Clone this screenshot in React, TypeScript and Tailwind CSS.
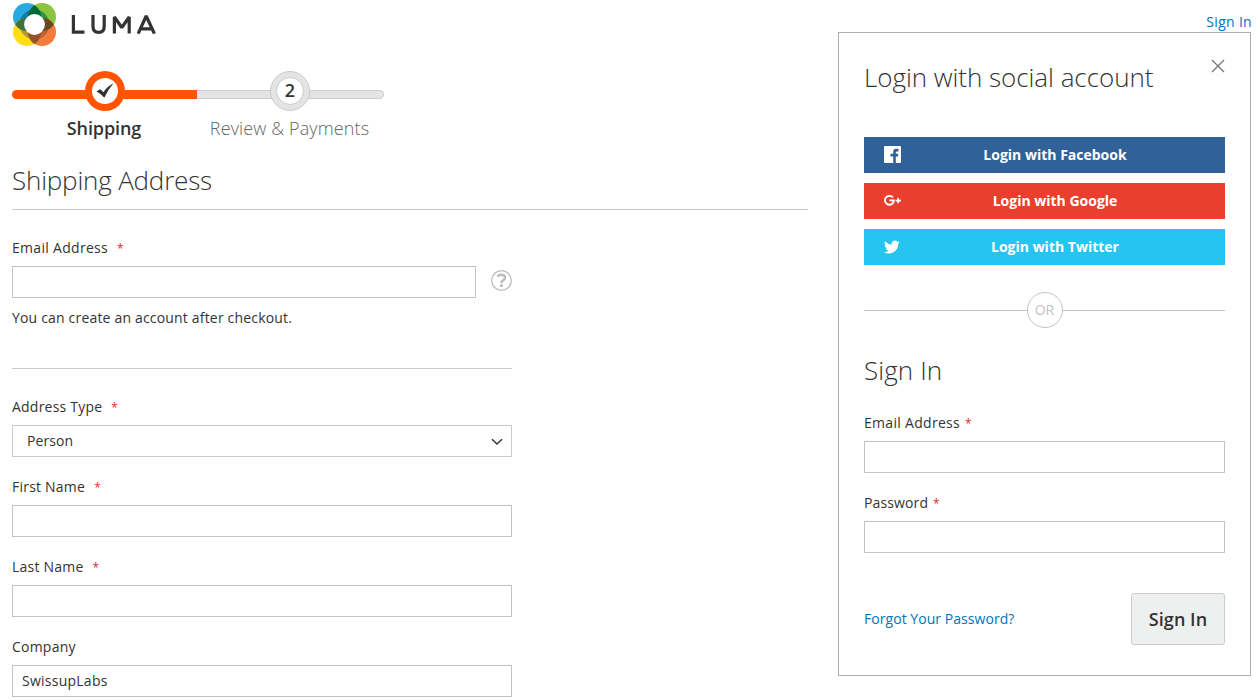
import React from "react";

const inputClass =
  "block h-8 w-full border border-[#c2c2c2] bg-white px-[9px] pb-[2px] text-sm tracking-[0.25px] text-[#333] outline-none";

function Star({ wide = false }: { wide?: boolean }) {
  return (
    <span className={wide ? "ml-[9px] text-xs text-[#e02b27]" : "ml-[5px] text-xs text-[#e02b27]"}>*</span>
  );
}

function Logo() {
  return (
    <svg className="ml-3 block h-[50px] w-[146px]" viewBox="12 0 146 50" role="img" aria-label="Luma">
      <defs>
        <clipPath id="tl"><circle cx="27" cy="17" r="14" /></clipPath>
        <clipPath id="tr"><circle cx="42" cy="17" r="14" /></clipPath>
        <clipPath id="bl"><circle cx="27" cy="32" r="14" /></clipPath>
        <clipPath id="br"><circle cx="42" cy="32" r="14" /></clipPath>
      </defs>
      <circle cx="27" cy="17" r="14" fill="#27aae1" />
      <circle cx="42" cy="17" r="14" fill="#8bc53f" />
      <circle cx="27" cy="32" r="14" fill="#ffde17" />
      <circle cx="42" cy="32" r="14" fill="#f37b3c" />
      <g clipPath="url(#tl)"><circle cx="34.5" cy="24.5" r="15" fill="#0f7ba5" /></g>
      <g clipPath="url(#tr)"><circle cx="34.5" cy="24.5" r="15" fill="#2f9440" /></g>
      <g clipPath="url(#bl)"><circle cx="34.5" cy="24.5" r="15" fill="#b39a35" /></g>
      <g clipPath="url(#br)"><circle cx="34.5" cy="24.5" r="15" fill="#c0622f" /></g>
      <circle cx="27" cy="17" r="14" fill="#006838" clipPath="url(#tr)" />
      <circle cx="27" cy="17" r="14" fill="#3e7238" clipPath="url(#bl)" />
      <circle cx="42" cy="32" r="14" fill="#6b4722" clipPath="url(#tr)" />
      <circle cx="42" cy="32" r="14" fill="#94522a" clipPath="url(#bl)" />
      <circle cx="34.5" cy="24.5" r="10.4" fill="#fff" />
      <g fill="none" stroke="#333" strokeWidth="3.2">
        <path d="M73.4 15V32.2H84.5" />
        <path d="M93 15V26.5Q93 32.3 98.6 32.3T104.2 26.5V15" />
        <path d="M114.4 33.5V17L121.8 27.5L129.2 17V33.5" strokeLinejoin="bevel" />
        <path d="M138.2 33.7L146.2 16L154.4 33.7M141 28.8H151.5" strokeLinejoin="bevel" />
      </g>
    </svg>
  );
}

function Progress() {
  return (
    <ol className="flex w-[372px] text-center text-lg leading-6">
      <li className="flex w-[185px] flex-col items-center">
        <div className="grid h-10 w-full items-center">
          <div className="col-start-1 row-start-1 mt-[7px] h-[9px] rounded-l-full bg-[#ff5501]" />
          <div className="col-start-1 row-start-1 flex size-10 items-center justify-center justify-self-center rounded-full bg-[#ff5501]">
            <div className="flex size-[26px] items-center justify-center rounded-full bg-white">
              <svg className="mb-[2px] h-[15px] w-[18px]" viewBox="0 0 18 15">
                <path d="M.5 8.5L4 6.2Q6 7.4 7.3 9.2Q11.5 3.2 17.5 .3Q12.5 6 8.3 14.8Q5.2 10.7.5 8.5Z" fill="#333" />
              </svg>
            </div>
          </div>
        </div>
        <span className="mr-px mt-[5px] font-semibold tracking-[-0.1px] text-[#333]">Shipping</span>
      </li>
      <li className="flex w-[187px] flex-col items-center">
        <div className="grid h-10 w-full items-center">
          <div className="col-start-1 row-start-1 mt-[7px] h-[9px] rounded-r-full border border-l-0 border-[#ccc] bg-[#e4e4e4]" />
          <div className="col-start-1 row-start-1 mr-[2px] flex size-10 items-center justify-center justify-self-center rounded-full border border-[#ccc] bg-[#e4e4e4]">
            <div className="flex size-7 items-center justify-center rounded-full border border-[#ccc] bg-white pb-[2px] pl-px font-semibold text-[#333]">2</div>
          </div>
        </div>
        <span className="mr-[2px] mt-[5px] whitespace-nowrap font-light tracking-[0.13px] text-[#666]">Review &amp; Payments</span>
      </li>
    </ol>
  );
}

function Field({ label, required, children }: { label: string; required?: boolean; children: React.ReactNode }) {
  return (
    <div className="h-20 w-[500px]">
      <div className="mb-2 h-5 tracking-[0.22px]">{label}{required && <Star wide />}</div>
      {children}
    </div>
  );
}

function Social({ color, icon, name }: { color: string; icon: React.ReactNode; name: string }) {
  return (
    <button className={`flex h-9 w-full items-center pl-5 text-sm font-bold text-white ${color}`}>
      <span className="flex w-[17px]">{icon}</span>
      <span className="flex-1 pl-[2px] pr-[18px] text-center">Login with {name}</span>
    </button>
  );
}

export default function App() {
  return (
    <div className="flex h-[700px] w-[1260px] overflow-hidden bg-white font-['Open_Sans',sans-serif] text-sm leading-5 text-[#333]">
      <main className="w-[838px]">
        <Logo />
        <div className="ml-3 mt-[21px] w-[796px]">
          <Progress />
          <h1 className="mt-[23px] h-[47px] border-b border-[#ccc] text-[26px] font-light leading-[34px] tracking-[-0.19px]">Shipping Address</h1>
          <div className="mt-7 h-5 tracking-[0.3px]">Email Address<Star wide /></div>
          <div className="mt-2 flex w-[500px] items-start">
            <input className="h-8 w-[464px] border border-[#c2c2c2] outline-none" aria-label="Email Address" />
            <svg className="ml-[15px] mt-1 size-[21px]" viewBox="0 0 21 21" fill="none" stroke="#bbb">
              <circle cx="10.5" cy="10.5" r="9.8" strokeWidth="1.3" />
              <path d="M6.4 6.2Q8.2 4.8 10.4 4.8Q14 4.8 14 7.6Q14 9.2 12.2 10.3Q10.5 11.3 10.5 12.9" strokeWidth="2.4" />
              <path d="M10.5 14.3V17" strokeWidth="2.8" />
            </svg>
          </div>
          <p className="mt-[10px] box-content h-[60px] w-[500px] border-b border-[#ccc] leading-5 tracking-[0.18px]">You can create an account after checkout.</p>
          <div className="mt-7">
            <Field label="Address Type" required>
              <div className="flex h-8 w-full items-center justify-between border border-[#ccc] pl-[14px] pr-[8.5px] tracking-[0.1px]">
                Person
                <svg className="h-3 w-3" viewBox="0 0 12 12" fill="none" stroke="#333" strokeWidth="1.5"><path d="M1 4.3L6 9L11 4.3" /></svg>
              </div>
            </Field>
            <Field label="First Name" required><input className={inputClass} aria-label="First Name" /></Field>
            <Field label="Last Name" required><input className={inputClass} aria-label="Last Name" /></Field>
            <Field label="Company"><input className={inputClass} aria-label="Company" defaultValue="SwissupLabs" /></Field>
          </div>
        </div>
      </main>
      <aside className="w-[413px]">
        <div className="-mr-px flex h-8 items-start justify-end pt-3 tracking-[0.3px] text-[#0074bc]">Sign In</div>
        <section className="h-[644px] border border-[#aeaeae] px-[25px]">
          <div className="flex h-[104px] justify-between pt-[26px]">
            <h2 className="text-[26px] font-light leading-9 tracking-[-0.05px]">Login with social account</h2>
            <svg className="size-[14px]" viewBox="0 0 14 14" stroke="#757575" strokeWidth="1.3"><path d="M1 1L13 13M13 1L1 13" /></svg>
          </div>
          <div className="flex flex-col gap-[10px]">
            <Social color="bg-[#306199]" name="Facebook" icon={
              <svg className="mb-px size-[17px]" viewBox="0 0 17 17"><rect width="17" height="17" rx="1" fill="#fff" /><path d="M9.2 17V10.4H6.5V7.7H9.2V6Q9.2 2.8 12.2 2.8H14.5V5.4H13Q11.8 5.4 11.8 6.5V7.7H14.4L14 10.4H11.8V17Z" fill="#306199" /></svg>} />
            <Social color="bg-[#e93f2e]" name="Google" icon={
              <svg className="mb-px h-[11px] w-[17px]" viewBox="0 0 17 11"><path d="M8.8 2.5A4.4 4.4 0 1 0 9.8 5.4H5.4" fill="none" stroke="#fff" strokeWidth="1.9" /><path d="M14.2 3V8.2M11.6 5.6H17" stroke="#fff" strokeWidth="1.7" /></svg>} />
            <Social color="bg-[#26c4f1]" name="Twitter" icon={
              <svg className="mb-px size-4" viewBox="0 0 24 24" fill="#fff"><path d="M23.6 4.9a9.7 9.7 0 0 1-2.8.8 4.8 4.8 0 0 0 2.1-2.7 9.7 9.7 0 0 1-3 1.2 4.8 4.8 0 0 0-8.3 4.4A13.7 13.7 0 0 1 1.7 3.5a4.8 4.8 0 0 0 1.5 6.4A4.8 4.8 0 0 1 1 9.3a4.8 4.8 0 0 0 3.9 4.8 4.8 4.8 0 0 1-2.2.1 4.8 4.8 0 0 0 4.5 3.3A9.7 9.7 0 0 1 0 19.5a13.7 13.7 0 0 0 21.1-12.1 9.8 9.8 0 0 0 2.5-2.5Z" /></svg>} />
          </div>
          <div className="mt-[27px] flex h-9 items-center text-[#c2c2c2]">
            <div className="h-px flex-1 bg-[#c2c2c2]" />
            <div className="flex size-9 items-center justify-center rounded-full border border-[#c2c2c2]">OR</div>
            <div className="h-px flex-1 bg-[#c2c2c2]" />
          </div>
          <h2 className="mt-6 text-[26px] font-light leading-9 tracking-[0.1px]">Sign In</h2>
          <div className="mt-[25px] h-5 tracking-[0.3px]">Email Address<Star /></div>
          <input className={`mt-2 ${inputClass}`} aria-label="Email" />
          <div className="mt-5 h-5 tracking-[0.12px]">Password<Star /></div>
          <input type="password" className={`mt-2 ${inputClass}`} aria-label="Password" />
          <div className="mt-10 flex items-center justify-between">
            <a className="tracking-[0.05px] text-[#0074bc]">Forgot Your Password?</a>
            <button className="h-[52px] w-[94px] rounded-[3px] border border-[#ccc] bg-[#eeefef] text-lg font-semibold tracking-[0.05px]">Sign In</button>
          </div>
        </section>
      </aside>
    </div>
  );
}
